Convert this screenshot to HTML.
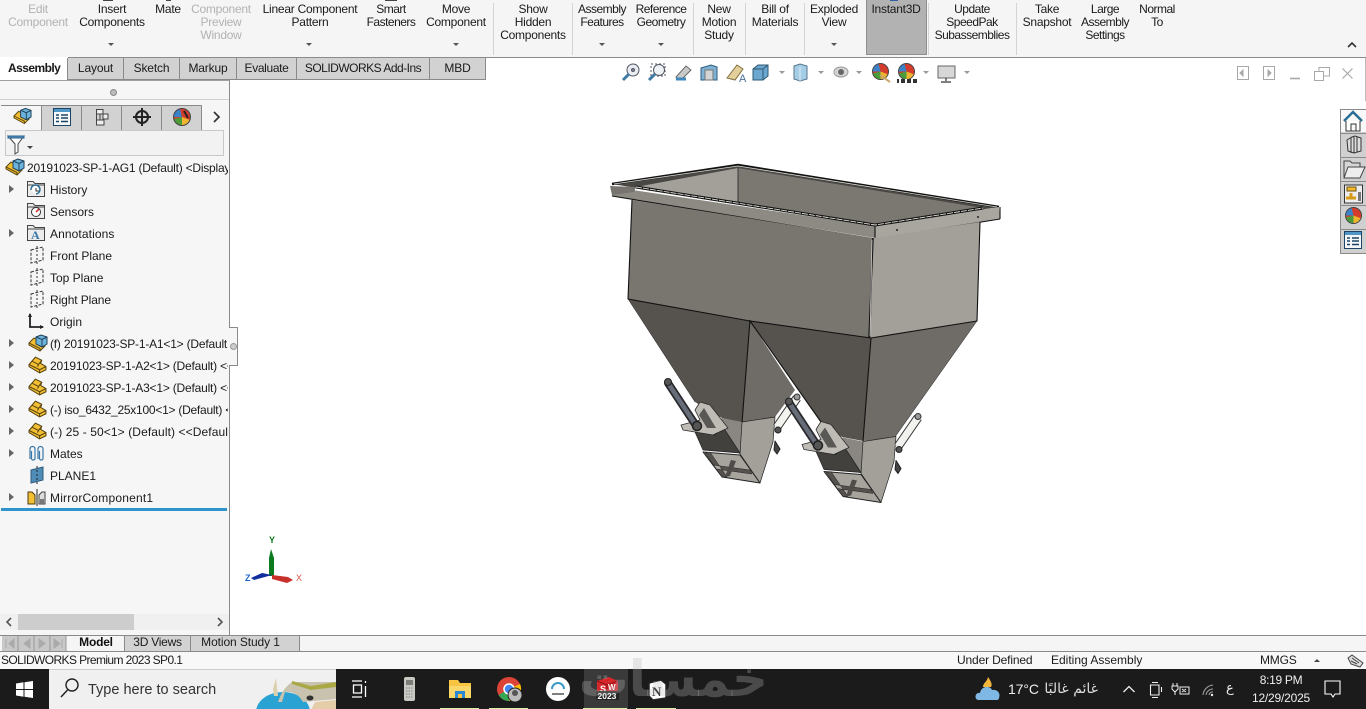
<!DOCTYPE html>
<html><head><meta charset="utf-8"><style>
html,body{margin:0;padding:0;width:1366px;height:709px;overflow:hidden;background:#fff;font-family:"Liberation Sans","DejaVu Sans",sans-serif;font-size:12px;color:#1a1a1a}
.a{position:absolute}
.r{position:absolute;top:3px;line-height:13px;text-align:center;width:120px;white-space:nowrap;letter-spacing:-.25px}
.n{letter-spacing:-.5px}
.g{color:#b2b2b2}
.s{position:absolute;top:3px;width:1px;height:52px;background:#d4d4d4}
.d{position:absolute;top:43px;width:0;height:0;border-left:3px solid transparent;border-right:3px solid transparent;border-top:3px solid #555}
.t{position:absolute;top:58px;height:22px;line-height:21px;text-align:center;background:#d2d2d2;border-right:1px solid #8a8a8a;border-bottom:1px solid #8a8a8a;box-sizing:border-box;white-space:nowrap;letter-spacing:-.15px}
.ft{position:absolute;left:50px;line-height:14px;white-space:nowrap}
.ar{position:absolute;left:9px;width:0;height:0;border-left:5px solid #666;border-top:4px solid transparent;border-bottom:4px solid transparent}
.st{position:absolute;top:653px;line-height:15px;white-space:nowrap}
.bt{position:absolute;top:636px;height:15px;line-height:13px;text-align:center;background:#d2d2d2;border-right:1px solid #8a8a8a;box-sizing:border-box;white-space:nowrap;letter-spacing:-.1px}
svg{position:absolute;overflow:visible}
</style></head><body>
<svg width="0" height="0" style="left:0;top:0"><defs>
<symbol id="part" viewBox="0 0 18 18"><path d="M1 9 7 2 13 5 12 8 17 11V14L11 17 1 11Z" fill="#f3c033" stroke="#5a4510"/><path d="M1 9 11 14 17 11M11 14V17M4 6 10 9 13 5M10 9 9 11" fill="none" stroke="#5a4510"/></symbol>
<symbol id="asm" viewBox="0 0 20 18"><path d="M1 9 6 4 14 9 17 12 12 17 1 11Z" fill="#f3c033" stroke="#5a4510"/><path d="M1 9 12 14.500V17" fill="none" stroke="#5a4510"/><path d="M8 3 13 1 19 3V10L14 13 8 10Z" fill="#6db4dc" stroke="#1f3f58"/><path d="M8 3 14 5.500 19 3M14 5.500V13" fill="none" stroke="#1f3f58"/></symbol>
<symbol id="plane" viewBox="0 0 16 18"><path d="M2 4 14 1V14L2 17Z" fill="none" stroke="#333" stroke-dasharray="3 1.500"/><path d="M8 0V18" stroke="#333" stroke-dasharray="2 2"/></symbol>
<symbol id="folder" viewBox="0 0 18 17"><path d="M.5 16.500V1.500H6L8 3.500H17.500V16.500Z" fill="#ececec" stroke="#444"/><path d="M.5 5H17.500" stroke="#444"/></symbol>
<symbol id="ball" viewBox="0 0 18 18"><circle cx="9" cy="9" r="8.500" fill="#d63c2c"/><path d="M9 9 .5 9A8.500 8.500 0 0 1 7 1Z" fill="#3a83c9"/><path d="M9 9 1 11A8.500 8.500 0 0 0 9 17.500Z" fill="#4c9c3a"/><path d="M9 9V17.500A8.500 8.500 0 0 0 17 12Z" fill="#eeb52e"/><circle cx="9" cy="9" r="8.500" fill="none" stroke="#444"/></symbol>
<symbol id="list" viewBox="0 0 18 18"><rect x=".5" y=".5" width="17" height="17" fill="#f4f8fb" stroke="#1d4464"/><rect x="1" y="1" width="16" height="3" fill="#4f97c6"/><path d="M3 7H6M8 7H15M3 10H6M8 10H15M3 13.500H6M8 13.500H15" stroke="#1d4464" stroke-width="1.500"/></symbol>
</defs></svg>

<!-- ribbon -->
<div class="a" style="left:0;top:0;width:1366px;height:57px;background:#f5f5f5"></div>
<div class="a" style="left:68px;top:57px;width:1298px;height:1px;background:#8a8a8a"></div>
<div class="a" style="left:866px;top:0;width:61px;height:55px;background:#b2b2b2;border:1px solid #8f8f8f;border-top:0;box-sizing:border-box"></div>
<div class="s" style="left:493px"></div><div class="s" style="left:572px"></div><div class="s" style="left:693px"></div><div class="s" style="left:745px"></div><div class="s" style="left:804px"></div><div class="s" style="left:928px"></div><div class="s" style="left:1016px"></div>
<div class="a" style="left:103px;top:0;width:10px;height:1px;background:#444"></div>
<div class="a" style="left:166px;top:0;width:5px;height:1px;background:#444"></div>
<div class="a" style="left:385px;top:0;width:12px;height:1px;background:#444"></div>
<div class="a" style="left:890px;top:0;width:8px;height:1px;background:#2f5f9e"></div>
<div class="r g" style="left:-22px">Edit<br>Component</div>
<div class="r" style="left:52px">Insert<br>Components</div>
<div class="r" style="left:108px">Mate</div>
<div class="r g" style="left:161px">Component<br>Preview<br>Window</div>
<div class="r" style="left:250px">Linear Component<br>Pattern</div>
<div class="r n" style="left:331px">Smart<br>Fasteners</div>
<div class="r" style="left:396px">Move<br>Component</div>
<div class="r" style="left:473px">Show<br>Hidden<br>Components</div>
<div class="r n" style="left:542px">Assembly<br>Features</div>
<div class="r n" style="left:601px">Reference<br>Geometry</div>
<div class="r" style="left:659px">New<br>Motion<br>Study</div>
<div class="r" style="left:715px">Bill of<br>Materials</div>
<div class="r" style="left:774px">Exploded<br>View</div>
<div class="r" style="left:836px">Instant3D</div>
<div class="r n" style="left:912px">Update<br>SpeedPak<br>Subassemblies</div>
<div class="r" style="left:987px">Take<br>Snapshot</div>
<div class="r n" style="left:1045px">Large<br>Assembly<br>Settings</div>
<div class="r n" style="left:1097px">Normal<br>To</div>
<div class="d" style="left:108px"></div><div class="d" style="left:306px"></div><div class="d" style="left:453px"></div><div class="d" style="left:599px"></div><div class="d" style="left:658px"></div><div class="d" style="left:831px"></div>
<svg style="left:1347px;top:41px" width="10" height="7"><path d="M1 6 5 2 9 6" fill="none" stroke="#333" stroke-width="1.600"/></svg>

<!-- command tabs -->
<div class="a" style="left:8px;top:61px;font-weight:bold;line-height:15px;letter-spacing:-.55px">Assembly</div>
<div class="t" style="left:67px;width:57px;border-left:1px solid #8a8a8a">Layout</div>
<div class="t" style="left:124px;width:56px">Sketch</div>
<div class="t" style="left:180px;width:57px">Markup</div>
<div class="t" style="left:237px;width:60px;letter-spacing:-.35px">Evaluate</div>
<div class="t" style="left:297px;width:133px;letter-spacing:-.5px">SOLIDWORKS Add-Ins</div>
<div class="t" style="left:430px;width:56px">MBD</div>

<!-- heads-up toolbar -->
<svg style="left:620px;top:62px" width="360" height="22" fill="none">
<g stroke="#556"><circle cx="13" cy="8" r="6" fill="#e8eef2"/><path d="M9 12 3 18" stroke="#3f7aa5" stroke-width="3"/><circle cx="13" cy="8" r="1.500" fill="#889"/></g>
<g stroke="#556"><rect x="31" y="2" width="14" height="12" stroke-dasharray="2 2"/><circle cx="39" cy="8" r="5.500" fill="#eef2f4"/><path d="M35 12 29 18" stroke="#3f7aa5" stroke-width="3"/></g>
<path d="M56 15 66 4 71 8 61 18Z" fill="#c9c9c9" stroke="#666"/><path d="M56 17H66" stroke="#3f88bd" stroke-width="3"/>
<path d="M81 6 91 3 97 5V18H93V8H85V18H81Z" fill="#7fb2d3" stroke="#2c5a7c"/><path d="M85 8 93 8V18H85Z" fill="#d4d4d4" stroke="#777"/>
<path d="M107 16 117 3 123 7 115 18Z" fill="#e3cf9a" stroke="#7f6d3b"/><text x="119" y="20" font-family="Liberation Sans" font-size="11" fill="#4a6f96">A</text>
<path d="M133 7H143V18H133ZM133 7 138 3H148V14L143 18M143 7 148 3" fill="#6ba7cf" stroke="#2f5772"/>
<path d="M159 9 162 12 165 9Z" fill="#999"/>
<path d="M174 4 180 2 187 4V17L180 19 174 17Z" fill="#a6cde6" stroke="#55768c"/><path d="M180 5V19" stroke="#dcedf6"/>
<path d="M198 9 201 12 204 9Z" fill="#999"/>
<ellipse cx="221" cy="10" rx="7" ry="5" fill="#d6d6d6" stroke="#999"/><circle cx="221" cy="10" r="3" fill="#666"/>
<path d="M236 9 239 12 242 9Z" fill="#999"/>
<use href="#ball" x="252" y="1" width="17" height="17"/><path d="M260 13 270 20" stroke="#c9a96a" stroke-width="2"/>
<use href="#ball" x="278" y="1" width="17" height="17"/><path d="M277 17H297V21H277Z" fill="#333"/><path d="M280 17V21M286 17V21M292 17V21" stroke="#fff" stroke-width="2"/>
<path d="M303 9 306 12 309 9Z" fill="#999"/>
<rect x="318" y="4" width="17" height="12" fill="#d7d7d7" stroke="#666"/><path d="M326 16V19M321 20H331" stroke="#555" stroke-width="1.500"/>
<path d="M344 9 347 12 350 9Z" fill="#999"/>
</svg>

<!-- window controls -->
<svg style="left:1235px;top:64px" width="125" height="20" fill="none" stroke="#a8a8a8">
<rect x="2.500" y="2.500" width="11" height="13"/><path d="M8 6V12L5 9Z" fill="#a8a8a8"/>
<rect x="28.500" y="2.500" width="11" height="13"/><path d="M33 6V12L36 9Z" fill="#a8a8a8"/>
<path d="M55 14.500H65" stroke-width="1.600"/>
<path d="M79.500 7.500H88.500V16.500H79.500ZM84 7V3.500H94.500V12H89"/>
<path d="M107.500 4.500 117.500 14.500M117.500 4.500 107.500 14.500" stroke-width="1.200"/>
</svg>
<div class="a" style="left:1365px;top:58px;width:1px;height:43px;background:#bbb"></div>

<!-- task pane -->
<div class="a" style="left:1340px;top:109px;width:26px;height:145px;background:#d0d0d0;border-left:1px solid #8a8a8a;border-top:1px solid #8a8a8a;border-bottom:1px solid #8a8a8a;box-sizing:border-box"></div>
<div class="a" style="left:1341px;top:110px;width:25px;height:22px;background:#f8f8f8"></div>
<div class="a" style="left:1341px;top:133px;width:25px;height:1px;background:#8a8a8a"></div>
<div class="a" style="left:1341px;top:157px;width:25px;height:1px;background:#8a8a8a"></div>
<div class="a" style="left:1341px;top:181px;width:25px;height:1px;background:#8a8a8a"></div>
<div class="a" style="left:1341px;top:205px;width:25px;height:1px;background:#8a8a8a"></div>
<div class="a" style="left:1341px;top:229px;width:25px;height:1px;background:#8a8a8a"></div>
<svg style="left:1340px;top:109px" width="26" height="145" fill="none">
<path d="M4 12 13 3 22 12" stroke="#2a6d94" stroke-width="2.500"/><path d="M6 12V22H20V12M11 22V15H16V22" stroke="#333" fill="#fff"/>
<path d="M7 31 12 28 15 27 21 29V42L14 44 8 42Z" fill="#ddd" stroke="#333"/><path d="M11 29V44M14 28V44M17 28V43" stroke="#333"/>
<path d="M4 68V52H10L12 54H20V58" stroke="#444" fill="#d6d6d6"/><path d="M8 58H25L20 69H4Z" fill="#eee" stroke="#444"/>
<rect x="4.500" y="76" width="18" height="18" fill="#eee" stroke="#333"/><rect x="7" y="78" width="9" height="4" fill="#f4bb2d" stroke="#6a5210"/><path d="M6 89H16M11 84V89" stroke="#d69a18" stroke-width="3"/><rect x="18" y="83" width="3" height="9" fill="#777"/>
<use href="#ball" x="5" y="98" width="17" height="17"/>
<use href="#list" x="4" y="122" width="18" height="18"/>
</svg>

<!-- feature manager -->
<div class="a" style="left:0;top:80px;width:230px;height:555px;background:#f6f6f6;border-right:1px solid #8a8a8a;border-top:1px solid #a0a0a0;box-sizing:border-box"></div>
<div class="a" style="left:0;top:99px;width:229px;height:1px;background:#d0d0d0"></div>
<div class="a" style="left:110px;top:89px;width:5px;height:5px;border-radius:50%;background:#bbb;border:1px solid #888"></div>
<div class="a" style="left:41px;top:105px;width:161px;height:24px;background:#d2d2d2;border-top:1px solid #8a8a8a;border-bottom:1px solid #8a8a8a"></div>
<div class="a" style="left:1px;top:105px;width:40px;height:25px;background:#f6f6f6;border-top:1px solid #8a8a8a"></div>
<div class="a" style="left:41px;top:105px;width:1px;height:25px;background:#8a8a8a"></div>
<div class="a" style="left:81px;top:105px;width:1px;height:25px;background:#8a8a8a"></div>
<div class="a" style="left:121px;top:105px;width:1px;height:25px;background:#8a8a8a"></div>
<div class="a" style="left:161px;top:105px;width:1px;height:25px;background:#8a8a8a"></div>
<div class="a" style="left:201px;top:105px;width:1px;height:25px;background:#8a8a8a"></div>
<svg style="left:0;top:104px" width="229" height="26" fill="none">
<use href="#asm" x="13" y="3" width="19" height="18"/>
<use href="#list" x="53" y="4" width="18" height="18"/>
<path d="M96.500 5.500H103V10H96.500ZM96.500 16H104V21H96.500ZM100 10V16M96.500 5.500V21" stroke="#444" fill="#eee"/><path d="M103 10H108V15H103Z" fill="#eee" stroke="#444"/>
<circle cx="142" cy="13" r="6" stroke="#222" stroke-width="2"/><path d="M142 4V22M133 13H151" stroke="#222" stroke-width="2"/>
<use href="#ball" x="173" y="4" width="18" height="18"/><path d="M184 7 188 14" stroke="#222" stroke-width="2"/>
<path d="M214 8 219 13 214 18" stroke="#333" stroke-width="1.700"/>
</svg>
<div class="a" style="left:5px;top:130px;width:219px;height:26px;border:1px solid #c8c8c8;background:#f2f2f2;box-sizing:border-box"></div>
<svg style="left:7px;top:134px" width="28" height="20" fill="none"><path d="M1 2H17L11 10V18L8 20V10Z" fill="#fff" stroke="#444"/><path d="M1 2H17V4H1Z" fill="#4f97c6" stroke="#2b5f85"/><path d="M20 12 26 12 23 15Z" fill="#444"/></svg>

<div class="a" style="left:0;top:158px;width:228px;height:355px;overflow:hidden">
<svg style="left:5px;top:0" width="20" height="18"><use href="#asm" width="20" height="18"/></svg>
<div class="a" style="left:27px;top:3px;line-height:14px;white-space:nowrap;letter-spacing:-.22px">20191023-SP-1-AG1 (Default) &lt;Display State-1&gt;</div>
<div class="ft" style="top:25px">History</div>
<div class="ft" style="top:47px">Sensors</div>
<div class="ft" style="top:69px;letter-spacing:.1px">Annotations</div>
<div class="ft" style="top:91px">Front Plane</div>
<div class="ft" style="top:113px">Top Plane</div>
<div class="ft" style="top:135px;letter-spacing:-.1px">Right Plane</div>
<div class="ft" style="top:157px">Origin</div>
<div class="ft" style="top:179px;letter-spacing:-.2px">(f) 20191023-SP-1-A1&lt;1&gt; (Default &lt;Display</div>
<div class="ft" style="top:201px;letter-spacing:-.2px">20191023-SP-1-A2&lt;1&gt; (Default) &lt;&lt;Default</div>
<div class="ft" style="top:223px;letter-spacing:-.2px">20191023-SP-1-A3&lt;1&gt; (Default) &lt;&lt;Default</div>
<div class="ft" style="top:245px;letter-spacing:-.25px">(-) iso_6432_25x100&lt;1&gt; (Default) &lt;&lt;Default</div>
<div class="ft" style="top:267px;letter-spacing:.1px">(-) 25 - 50&lt;1&gt; (Default) &lt;&lt;Default&gt;_Displ</div>
<div class="ft" style="top:289px">Mates</div>
<div class="ft" style="top:311px">PLANE1</div>
<div class="ft" style="top:333px;letter-spacing:.2px">MirrorComponent1</div>
<div class="ar" style="top:27px"></div><div class="ar" style="top:71px"></div><div class="ar" style="top:181px"></div><div class="ar" style="top:203px"></div><div class="ar" style="top:225px"></div><div class="ar" style="top:247px"></div><div class="ar" style="top:269px"></div><div class="ar" style="top:291px"></div><div class="ar" style="top:335px"></div>
<svg style="left:27px;top:22px" width="18" height="17"><use href="#folder" width="18" height="17"/><path d="M4 10A4.500 4.500 0 1 1 9 14" fill="#fff" stroke="#2a6d94" stroke-width="1.500"/><path d="M9 8V11H12" stroke="#333" fill="none"/></svg>
<svg style="left:27px;top:44px" width="18" height="17"><use href="#folder" width="18" height="17"/><circle cx="9" cy="10" r="4.500" fill="#fff" stroke="#333"/><path d="M9 10 12 7" stroke="#c22" stroke-width="1.500"/></svg>
<svg style="left:27px;top:66px" width="18" height="17"><use href="#folder" width="18" height="17"/><text x="4" y="15" font-family="Liberation Serif" font-weight="bold" font-size="12" fill="#3a77a8">A</text></svg>
<svg style="left:29px;top:88px" width="16" height="18"><use href="#plane" width="16" height="18"/></svg>
<svg style="left:29px;top:110px" width="16" height="18"><use href="#plane" width="16" height="18"/></svg>
<svg style="left:29px;top:132px" width="16" height="18"><use href="#plane" width="16" height="18"/></svg>
<svg style="left:27px;top:154px" width="20" height="20" fill="none"><path d="M3 2V15H16" stroke="#222" stroke-width="1.800"/><path d="M1 5 3 1 5 5ZM13 13 17 15 13 17Z" fill="#222"/></svg>
<svg style="left:28px;top:176px" width="20" height="18"><use href="#asm" width="20" height="18"/></svg>
<svg style="left:28px;top:197px" width="19" height="19"><use href="#part" width="19" height="19"/></svg>
<svg style="left:28px;top:219px" width="19" height="19"><use href="#part" width="19" height="19"/></svg>
<svg style="left:28px;top:241px" width="19" height="19"><use href="#part" width="19" height="19"/></svg>
<svg style="left:28px;top:263px" width="19" height="19"><use href="#part" width="19" height="19"/></svg>
<svg style="left:27px;top:287px" width="20" height="18" fill="none" stroke="#3a77a8" stroke-width="1.200"><path d="M3 14V4A2.500 2.500 0 0 1 8 4V14A2 2 0 0 1 4.500 14V6"/><path d="M11 14V4A2.500 2.500 0 0 1 16 4V14A2 2 0 0 1 12.500 14V6"/></svg>
<svg style="left:29px;top:308px" width="16" height="18"><path d="M2 4 14 1V14L2 17Z" fill="#4f8db8" stroke="#2c5a7c"/><path d="M8 0V18" stroke="#222" stroke-dasharray="2 2"/></svg>
<svg style="left:27px;top:330px" width="20" height="18" fill="none"><path d="M1 4H5L8 7V16H1Z" fill="#f3c033" stroke="#4a3a10"/><path d="M12 7 15 4H18V16H12Z" fill="#ddd" stroke="#444"/><path d="M10 1V18" stroke="#222"/><rect x="13" y="11" width="4" height="5" fill="#777"/></svg>
</div>
<div class="a" style="left:1px;top:508px;width:226px;height:3px;background:#2f93cc"></div>

<!-- fly-out tab -->
<div class="a" style="left:229px;top:327px;width:9px;height:39px;background:#f6f6f6;border:1px solid #8a8a8a;border-left:0;box-sizing:border-box"></div>
<div class="a" style="left:230px;top:343px;width:5px;height:5px;border-radius:50%;background:#ccc;border:1px solid #999"></div>

<!-- h scrollbar -->
<div class="a" style="left:0;top:614px;width:229px;height:16px;background:#f0f0f0"></div>
<div class="a" style="left:18px;top:614px;width:116px;height:16px;background:#cdcdcd"></div>
<svg style="left:0;top:614px" width="229" height="16" fill="none" stroke="#555" stroke-width="1.600"><path d="M11 4 7 8 11 12M218 4 222 8 218 12"/></svg>

<!-- bottom tabs -->
<div class="a" style="left:0;top:635px;width:1366px;height:17px;background:#f5f5f5;border-top:1px solid #8a8a8a;border-bottom:1px solid #8a8a8a;box-sizing:border-box"></div>
<div class="a" style="left:2px;top:636px;width:64px;height:15px;background:#c8c8c8"></div>
<svg style="left:2px;top:636px" width="64" height="15"><path d="M16 0V15M32 0V15M48 0V15M64 0V15" stroke="#999"/><path d="M4 3V12M12 3 7 7.500 12 12ZM28 3 22 7.500 28 12ZM37 3 43 7.500 37 12ZM52 3 58 7.500 52 12ZM60 3V12" fill="#aaa" stroke="#aaa"/></svg>
<div class="a" style="left:67px;top:636px;width:58px;text-align:center;line-height:13px;font-weight:bold;color:#111;height:15px;background:#f5f5f5;letter-spacing:-.2px">Model</div>
<div class="bt" style="left:124px;width:67px;border-left:1px solid #8a8a8a;letter-spacing:-.25px">3D Views</div>
<div class="bt" style="left:191px;width:109px;padding-right:9px">Motion Study 1</div>

<!-- status -->
<div class="a" style="left:0;top:652px;width:1366px;height:17px;background:#f8f8f8"></div>
<div class="st" style="left:1px;letter-spacing:-.6px">SOLIDWORKS Premium 2023 SP0.1</div>
<div class="st" style="left:957px;letter-spacing:-.15px">Under Defined</div>
<div class="st" style="left:1051px">Editing Assembly</div>
<div class="st" style="left:1260px;letter-spacing:-.2px">MMGS</div>
<div class="a" style="left:1314px;top:659px;width:0;height:0;border-left:3px solid transparent;border-right:3px solid transparent;border-bottom:3px solid #444"></div>
<svg style="left:1347px;top:654px" width="18" height="14" fill="none"><path d="M1 4 5 1 16 9 13 13 4 10Z" fill="#ddd" stroke="#444"/><path d="M5 4 12 9M4 7 10 10" stroke="#444"/></svg>

<!-- model -->
<svg style="left:0;top:0" width="1366" height="709" stroke-linejoin="round">
<defs>
<g id="spout">
<path d="M722 418 742 422 740 454 703 437Z" fill="#8a8782"/>
<path d="M742 422 775 417 773 442 760 483 740 454Z" fill="#a3a09a" stroke="#222" stroke-width=".7"/>
<path d="M695 432 715 435 723 427 740 453 703 450Z" fill="#43413e" stroke="#222" stroke-width=".7"/>
<path d="M703 452 740 455 760 483 722 477Z" fill="#a7a49e" stroke="#222" stroke-width="1"/>
<path d="M705 453 722 477 727 477 710 452ZM713 465 750 470 752 474 716 469Z" fill="#55524e" stroke="#222" stroke-width=".5"/>
<path d="M725 477 731 460 736 461 730 476Z" fill="#4f4c49"/>
<path d="M700 402 710 405 728 428 717 433 713 435 683 430 681 425 700 420 695 410Z" fill="#bfbcb6" stroke="#2a2a2a" stroke-width=".8"/>
<path d="M704 408 716 428 707 428 699 415Z" fill="#5a5854"/>
<path d="M668 383 695 424" stroke="#2a2a2e" stroke-width="8" stroke-linecap="round"/>
<path d="M668 383 695 424" stroke="#666c78" stroke-width="4.500"/>
<circle cx="668" cy="382" r="3.500" fill="#555" stroke="#222"/>
<circle cx="697" cy="426" r="4.500" fill="#555" stroke="#222" stroke-width="1.500"/>
<path d="M777 427 797 398" stroke="#333" stroke-width="9"/>
<path d="M777 427 797 398" stroke="#f2f2ee" stroke-width="7"/>
<circle cx="778" cy="430" r="3" fill="#555" stroke="#222"/>
<circle cx="797" cy="397" r="3" fill="#999" stroke="#333"/>
<path d="M775 441 780 449 777 454 774 450Z" fill="#444" stroke="#222"/>
</g>
</defs>
<!-- rim top, dark base -->
<path d="M612 184 738 165 999 207 875 226Z" fill="#4a4845"/>
<!-- interior -->
<path d="M738 168 983 208 875 225 738 203Z" fill="#7b7872"/>
<path d="M636 187 738 168 738 203Z" fill="#a3a09a"/>
<path d="M738 168V203" stroke="#222" stroke-width=".8"/>
<!-- rim -->
<path d="M612 184 738 165 999 207" fill="none" stroke="#111" stroke-width="2.500"/>
<path d="M614 184 738 166 997 207" fill="none" stroke="#d8d6d0" stroke-width=".8"/>
<path d="M612 187 875 226V238L612 196Z" fill="#8d8a84"/>
<path d="M875 225 999 207 1000 219 875 238Z" fill="#a9a6a0"/>
<path d="M636 187 875 225 983 208" fill="none" stroke="#111" stroke-width="3"/>
<path d="M636 187 875 225 983 208" fill="none" stroke="#e0ded8" stroke-width=".9" stroke-dasharray="6 1"/>
<path d="M612 196 875 239 1000 219M875 226V238M1000 207V219" fill="none" stroke="#111" stroke-width="1.100"/>
<path d="M610 186 636 187 634 192 612 195Z" fill="#77746f"/>
<circle cx="897" cy="230" r="1" fill="#222"/><circle cx="978" cy="217" r="1" fill="#222"/>
<!-- funnels -->
<path d="M750 321 742 422 775 417 795 390Z" fill="#6f6c67"/>
<path d="M628 299 750 321 742 423 722 418 695 402Z" fill="#56524e"/>
<path d="M871 338 977 321 895 437 863 441Z" fill="#6f6c67"/>
<path d="M750 321 871 338 863 441 842 437 821 422Z" fill="#56524e"/>
<!-- walls -->
<path d="M632 200 873 238 871 338 750 321 628 299Z" fill="#797670"/>
<path d="M873 238 980 222 977 321 871 338Z" fill="#a3a09a"/>
<path d="M632 200 628 299 750 321 871 338 977 321 980 222" fill="none" stroke="#111" stroke-width="1.100"/>
<path d="M873 238 869 338" stroke="#111" stroke-width="1.500"/><path d="M872 240 870 336" stroke="#ddd" stroke-width=".7"/>
<path d="M750 320 742 423M750 321 821 422M871 338 863 441" stroke="#111" stroke-width="1.100" fill="none"/>
<path d="M628 299 695 402M977 321 895 437" stroke="#222" stroke-width=".5" fill="none"/>
<use href="#spout"/>
<use href="#spout" x="121" y="19.500"/>
<!-- triad -->
<path d="M271 549 274 558V576H269V558Z" fill="#0c7a1e"/>
<path d="M272 575 254 580 251 578 262 573Z" fill="#0f2fa0"/>
<path d="M272 575 288 577 293 580 287 583 272 579Z" fill="#c8302a"/>
<text x="269" y="543" font-family="Liberation Sans" font-size="9" font-weight="bold" fill="#0c7a1e">Y</text>
<text x="296" y="581" font-family="Liberation Sans" font-size="9" fill="#d9534a">X</text>
<text x="245" y="581" font-family="Liberation Sans" font-size="9" font-weight="bold" fill="#1f68c8">Z</text>
</svg>

<!-- taskbar -->
<div class="a" style="left:0;top:669px;width:1366px;height:40px;background:#1b1b1b"></div>
<svg style="left:16px;top:681px" width="18" height="17"><path d="M0 2.500 7.500 1.300V8H0ZM8.500 1.200 17 0V8H8.500ZM0 9H7.500V15.700L0 14.500ZM8.500 9H17V17L8.500 15.800Z" fill="#fff"/></svg>
<div class="a" style="left:49px;top:669px;width:287px;height:40px;background:#f0f0f0;border-top:1px solid #ccc;box-sizing:border-box;overflow:hidden">
<div class="a" style="left:39px;top:11px;font-size:14.500px;line-height:18px;color:#333;white-space:nowrap">Type here to search</div>
<svg style="left:0;top:-1px" width="287" height="41" fill="none">
<circle cx="23" cy="16" r="6" stroke="#222" stroke-width="1.400"/><path d="M18.500 21 12 28" stroke="#222" stroke-width="1.500"/>
<ellipse cx="234" cy="43" rx="27" ry="20" fill="#2aa3d4"/>
<path d="M262 41 266 33 287 31V41Z" fill="#e6cdaa"/>
<path d="M229 27 228 18 227 9 224 20 225 27Z" fill="#dcd0ad"/>
<path d="M229 33C232 24 236 18 243 13L287 13V30L254 33C250 26 244 22 236 23L233 33Z" fill="#c9c2ae"/>
<path d="M243 12 262 17 287 13V18L262 21 243 15Z" fill="#a9a845"/>
<ellipse cx="261" cy="29" rx="3.500" ry="2.500" fill="#333"/>
</svg>
</div>
<svg style="left:351px;top:680px" width="18" height="18" fill="none" stroke="#fff" stroke-width="1.300"><path d="M1 1H11M1 17H11M2.500 5H10.500V13H2.500ZM14.500 1V3M14.500 6V17"/></svg>
<svg style="left:403px;top:677px" width="14" height="24"><rect x="1" y="0" width="11" height="24" rx="2" fill="#c9c9c4"/><rect x="3" y="3" width="7" height="5" fill="#7d7d78"/><path d="M3 11H10M3 14H10M3 17H10M3 20H10" stroke="#888" stroke-dasharray="1.500 1"/></svg>
<svg style="left:449px;top:679px" width="22" height="20"><path d="M0 1H9L11 4H22V19H0Z" fill="#f7c542"/><path d="M0 7H22V19H0Z" fill="#fcd86a"/><path d="M6 12H16V19H6Z" fill="#2d87d4"/><path d="M9 15H13V19H9Z" fill="#f7c542"/></svg>
<svg style="left:497px;top:677px" width="26" height="26"><circle cx="12" cy="12" r="12" fill="#db4437"/><path d="M12 12 1.600 18A12 12 0 0 0 12 24Z" fill="#34a853"/><path d="M12 12V24A12 12 0 0 0 23 7Z" fill="#fbbc05"/><circle cx="12" cy="12" r="5" fill="#4285f4" stroke="#fff" stroke-width="1.500"/><circle cx="18" cy="18" r="7" fill="#bbb" stroke="#222"/><circle cx="18" cy="16" r="3" fill="#555"/></svg>
<svg style="left:546px;top:677px" width="24" height="24"><circle cx="12" cy="12" r="12" fill="#fff"/><path d="M6 12A6 6 0 0 1 18 12" fill="none" stroke="#3a9bc9" stroke-width="2"/><path d="M6 17H18" stroke="#555" stroke-width="1.500"/></svg>
<div class="a" style="left:584px;top:669px;width:44px;height:40px;background:#3a3a3a"></div>
<svg style="left:595px;top:677px" width="26" height="24"><path d="M2 4 14 0 23 4V17L14 21 2 17Z" fill="#d6282b"/><path d="M2 4 12 8 23 4M12 8V21" stroke="#8c1417" fill="none"/><text x="5" y="15" font-family="Liberation Sans" font-size="9" font-weight="bold" fill="#fff">S</text><text x="13" y="13" font-family="Liberation Sans" font-size="8" font-weight="bold" fill="#fff">W</text><rect x="1" y="14" width="23" height="9" rx="2" fill="#222"/><text x="2.500" y="22" font-family="Liberation Sans" font-size="8.500" font-weight="bold" fill="#fff">2023</text></svg>
<svg style="left:647px;top:679px" width="20" height="22"><path d="M2 4 14 1 19 5V19L6 21 2 17Z" fill="#fff" stroke="#222" stroke-width="1.500"/><text x="5" y="17" font-family="Liberation Serif" font-size="13" font-weight="bold" fill="#111">N</text></svg>
<div class="a" style="left:440px;top:708px;width:39px;height:1px;background:#d9efa5"></div>
<div class="a" style="left:489px;top:708px;width:39px;height:1px;background:#d9efa5"></div>
<div class="a" style="left:583px;top:708px;width:44px;height:1px;background:#d9efa5"></div>
<div class="a" style="left:636px;top:708px;width:40px;height:1px;background:#d9efa5"></div>
<div class="a" style="left:582px;top:650px;width:186px;height:58px;overflow:hidden;direction:rtl;font-family:'DejaVu Sans',sans-serif;font-size:50px;font-weight:bold;line-height:58px;color:rgba(185,185,185,.3);white-space:nowrap">خمسات</div>

<!-- tray -->
<svg style="left:975px;top:676px" width="26" height="26"><path d="M13 1C12 6 8 7 8 11L16 11C18 8 15 4 13 1Z" fill="#f2b63a"/><path d="M3 24C-1 23 0 16 5 17 6 10 15 9 17 14 22 13 26 17 24 22 24 23 23 24 22 24Z" fill="#7fb8e4"/></svg>
<div class="a" style="left:1008px;top:681px;color:#eee;font-size:14px;line-height:16px;letter-spacing:-.1px">17°C</div>
<div class="a" style="left:1040px;top:681px;width:58px;color:#ddd;font-size:14px;line-height:16px;text-align:right;direction:rtl;white-space:nowrap;font-family:'DejaVu Sans',sans-serif">غائم غالبًا</div>
<svg style="left:1120px;top:680px" width="120" height="20" fill="none" stroke="#eee" stroke-width="1.100">
<path d="M3.500 12 9 6.500 14.500 12" stroke-width="1.300"/>
<path d="M30.500 5H39V15H30.500ZM32 2.500H38M32 17.500H38M41.500 7V12"/>
<path d="M53 3V6M57 3V6M52 6H58V9L55 12 52 9ZM55 12V15M60 7H69V14H60ZM62 9 66 12M66 9 62 12" stroke-width="1"/>
<path d="M83 15A11 11 0 0 1 93 5M86 15A7 7 0 0 1 93 9M89 15A3.500 3.500 0 0 1 93 12" stroke="#999"/><circle cx="92" cy="15" r="1.200" fill="#eee" stroke="none"/>
</svg>
<div class="a" style="left:1226px;top:681px;color:#eee;font-size:13px;line-height:16px;font-family:'DejaVu Sans',sans-serif">ع</div>
<div class="a" style="left:1249px;top:672px;width:64px;text-align:center;color:#eee;font-size:12px;line-height:16px;letter-spacing:-.3px">8:19 PM</div>
<div class="a" style="left:1249px;top:690px;width:64px;text-align:center;color:#eee;font-size:12px;line-height:16px;letter-spacing:-.2px">12/29/2025</div>
<svg style="left:1324px;top:680px" width="18" height="18" fill="none" stroke="#fff" stroke-width="1.100"><path d="M1 1H16V14H11L9 17 7 14H1Z"/></svg>
</body></html>
